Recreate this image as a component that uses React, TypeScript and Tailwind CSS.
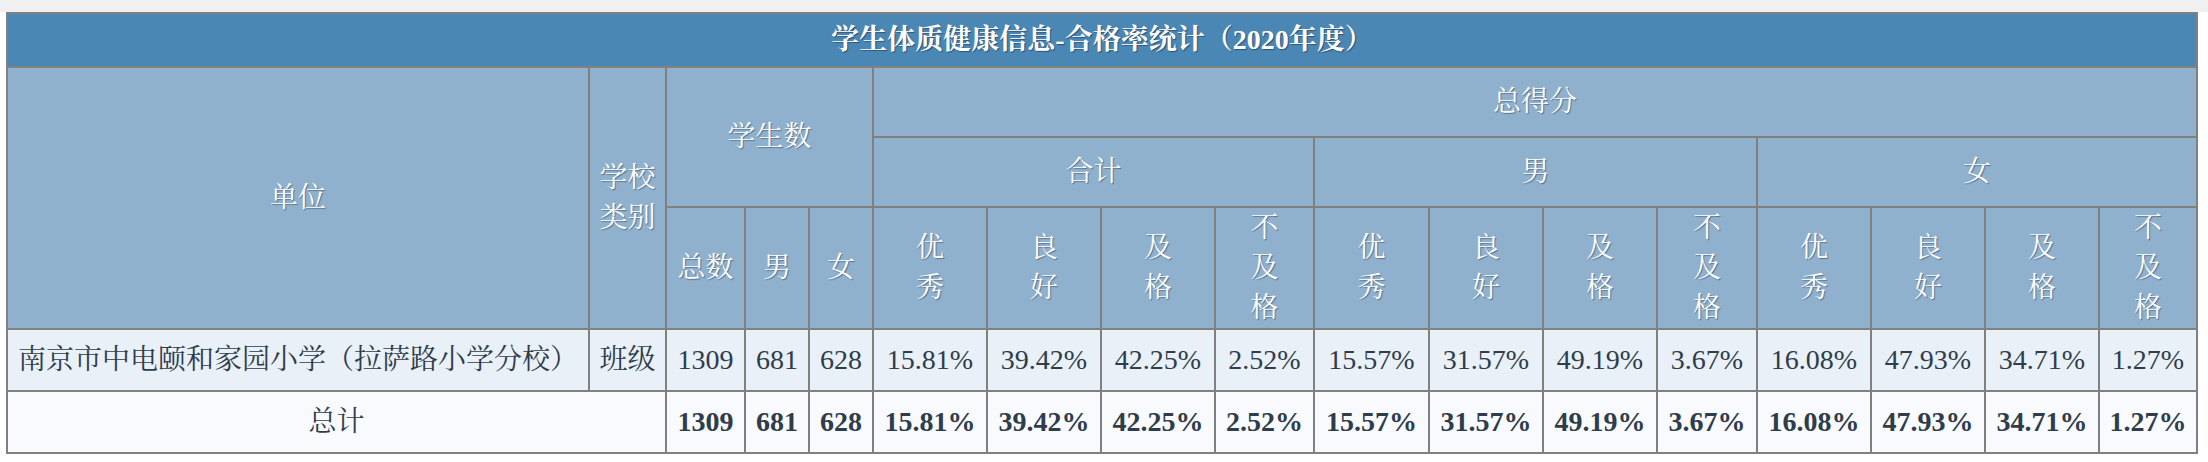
import React from "react";

const FONT = {
  fontFamily:
    '"Liberation Serif", "Noto Serif CJK SC", "Noto Sans CJK SC", serif',
};

const subHeads: string[][] = [
  ["优", "秀"],
  ["良", "好"],
  ["及", "格"],
  ["不", "及", "格"],
];

const dataRow = {
  name: "南京市中电颐和家园小学（拉萨路小学分校）",
  type: "班级",
  counts: ["1309", "681", "628"],
  rates: [
    "15.81%",
    "39.42%",
    "42.25%",
    "2.52%",
    "15.57%",
    "31.57%",
    "49.19%",
    "3.67%",
    "16.08%",
    "47.93%",
    "34.71%",
    "1.27%",
  ],
};

function Head({
  children,
  className = "",
}: {
  children: React.ReactNode;
  className?: string;
}) {
  return (
    <div
      className={`flex items-center justify-center bg-[#8fb1ce] text-center text-[28px] leading-[40px] text-white [text-shadow:1px_1px_1px_rgba(20,40,60,0.45)] ${className}`}
    >
      {children}
    </div>
  );
}

function Stack({ chars }: { chars: string[] }) {
  return (
    <div className="flex flex-col items-center">
      {chars.map((c, i) => (
        <span key={i} className="block leading-[40px]">
          {c}
        </span>
      ))}
    </div>
  );
}

function Cell({
  children,
  bold = false,
  total = false,
  className = "",
}: {
  children: React.ReactNode;
  bold?: boolean;
  total?: boolean;
  className?: string;
}) {
  return (
    <div
      className={`flex items-center justify-center text-[28px] leading-[40px] text-[#2f3d4a] ${
        total ? "bg-[#f8fafe]" : "bg-[#e9f0f8]"
      } ${bold ? "font-bold" : ""} ${className}`}
    >
      {children}
    </div>
  );
}

export default function App() {
  return (
    <div className="min-h-[462px] w-[2208px] bg-white" style={FONT}>
      <div className="h-[12px] w-full bg-[#f0f0f0]" />
      <div className="ml-[6px] grid w-[2192px] grid-cols-[580px_75px_77px_62px_62px_112px_112px_112px_97px_113px_112px_112px_98px_112px_112px_112px_96px] grid-rows-[52px_68px_68px_120px_60px_60px] gap-[2px] bg-[#808080] p-[2px]">
        <div className="col-span-17 flex items-center justify-center bg-[#4b87b5] text-[28px] font-bold text-white [text-shadow:1px_1px_1px_rgba(10,30,50,0.5)]">
          学生体质健康信息-合格率统计（2020年度）
        </div>

        <Head className="row-span-3">单位</Head>
        <Head className="row-span-3">
          <Stack chars={["学校", "类别"]} />
        </Head>
        <Head className="col-span-3 row-span-2">学生数</Head>
        <Head className="col-span-12">总得分</Head>

        <Head className="col-span-4">合计</Head>
        <Head className="col-span-4">男</Head>
        <Head className="col-span-4">女</Head>

        <Head>总数</Head>
        <Head>男</Head>
        <Head>女</Head>
        {[0, 1, 2].map((g) =>
          subHeads.map((s, i) => (
            <Head key={`${g}-${i}`}>
              <Stack chars={s} />
            </Head>
          ))
        )}

        <Cell className="justify-start pl-[10px]">{dataRow.name}</Cell>
        <Cell>{dataRow.type}</Cell>
        {dataRow.counts.map((c, i) => (
          <Cell key={`c${i}`}>{c}</Cell>
        ))}
        {dataRow.rates.map((r, i) => (
          <Cell key={`r${i}`}>{r}</Cell>
        ))}

        <Cell total className="col-span-2">
          总计
        </Cell>
        {dataRow.counts.map((c, i) => (
          <Cell key={`tc${i}`} total bold>
            {c}
          </Cell>
        ))}
        {dataRow.rates.map((r, i) => (
          <Cell key={`tr${i}`} total bold>
            {r}
          </Cell>
        ))}
      </div>
    </div>
  );
}
